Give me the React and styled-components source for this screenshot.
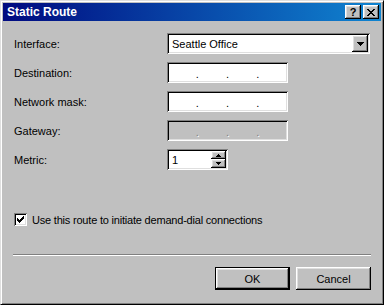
import React from 'react';
import styled, { createGlobalStyle } from 'styled-components';

const GlobalStyle = createGlobalStyle`
    body {
        margin: 0;
        background: #c0c0c0;
        font-family: "Liberation Sans", Arial, sans-serif;
        font-size: 11px;
        color: #000;
    }
`;

const raised = `
    background: #c0c0c0;
    box-shadow: inset -1px -1px #000, inset 1px 1px #fff, inset -2px -2px #808080, inset 2px 2px #dfdfdf;
`;

const sunken = `
    box-shadow: inset 1px 1px #808080, inset -1px -1px #fff, inset 2px 2px #000, inset -2px -2px #dfdfdf;
`;

const Window = styled.div`
    width: 384px;
    height: 305px;
    box-sizing: border-box;
    border: 1px solid;
    border-color: #dfdfdf #000 #000 #dfdfdf;
    box-shadow: inset 1px 1px #fff, inset -1px -1px #808080;
    padding: 2px;
    display: flex;
    flex-direction: column;
    background: #c0c0c0;
`;

const TitleBar = styled.div`
    height: 18px;
    display: flex;
    align-items: center;
    padding: 0 2px 0 4px;
    background: linear-gradient(to right, #000a80, #1084d0);
    color: #fff;
    font-weight: bold;
    font-size: 12px;
`;

const CaptionButtons = styled.div`
    margin-left: auto;
    display: flex;
    gap: 2px;
`;

const CaptionButton = styled.div`
    ${raised}
    width: 16px;
    height: 14px;
    display: flex;
    align-items: center;
    justify-content: center;
    color: #000;
    font-size: 11px;
    font-weight: bold;
    line-height: 1;
`;

const Body = styled.div`
    flex: 1;
    padding: 0 10px;
    display: flex;
    flex-direction: column;
`;

const Form = styled.div`
    margin-top: 12px;
    display: grid;
    grid-template-columns: 154px auto;
    row-gap: 8px;
    align-items: center;
`;

const Label = styled.div`
    padding-left: 1px;
`;

const Field = styled.div`
    ${sunken}
    box-sizing: border-box;
    height: 21px;
    width: ${p => p.$width}px;
    background: ${p => (p.$disabled ? '#c0c0c0' : '#fff')};
    display: flex;
    align-items: center;
`;

const FieldText = styled.span`
    padding-left: 5px;
    flex: 1;
`;

const DropButton = styled.div`
    ${raised}
    width: 16px;
    height: 17px;
    margin-right: 2px;
    display: flex;
    align-items: center;
    justify-content: center;
`;

const Dots = styled.div`
    flex: 1;
    display: flex;
    justify-content: space-evenly;
    padding-top: 3px;
    color: ${p => (p.$disabled ? '#808080' : '#000')};
    text-shadow: ${p => (p.$disabled ? '1px 1px #fff' : 'none')};
`;

const Dot = styled.span`
    width: 0;
    display: flex;
    justify-content: center;
`;

const SpinButtons = styled.div`
    display: flex;
    flex-direction: column;
    margin-right: 2px;
`;

const SpinButton = styled.div`
    ${raised}
    width: 15px;
    height: ${p => p.$h}px;
    display: flex;
    align-items: center;
    justify-content: center;
`;

const CheckRow = styled.label`
    margin-top: 43px;
    display: flex;
    align-items: center;
    gap: 5px;
    height: 13px;
    padding-left: 1px;
    letter-spacing: -0.2px;
`;

const CheckBox = styled.div`
    ${sunken}
    width: 13px;
    height: 13px;
    box-sizing: border-box;
    background: #fff;
    display: flex;
    align-items: center;
    justify-content: center;
`;

const Separator = styled.div`
    margin-top: 28px;
    border-top: 1px solid #808080;
    border-bottom: 1px solid #fff;
`;

const ButtonRow = styled.div`
    margin-top: 11px;
    display: flex;
    justify-content: flex-end;
    gap: 6px;
`;

const Button = styled.div`
    ${raised}
    width: 75px;
    height: 23px;
    box-sizing: border-box;
    display: flex;
    align-items: center;
    justify-content: center;
    ${p => p.$default && `
        border: 1px solid #000;
    `}
`;

const Pixels = ({ rows, color = '#000' }) => (
    <svg width={rows[0].length} height={rows.length} shapeRendering="crispEdges">
        {rows.map((r, y) =>
            r.split('').map((c, x) =>
                c === 'X' ? <rect key={x + '-' + y} x={x} y={y} width="1" height="1" fill={color} /> : null
            )
        )}
    </svg>
);

const closeGlyph = ['XX....XX', '.XX..XX.', '..XXXX..', '...XX...', '..XXXX..', '.XX..XX.', 'XX....XX'];
const checkGlyph = ['......X', '.....XX', 'X...XXX', 'XX.XXX.', 'XXXXX..', '.XXX...', '..X....'];
const downArrow = ['XXXXXXX', '.XXXXX.', '..XXX..', '...X...'];
const spinUp = ['..X..', '.XXX.', 'XXXXX'];
const spinDown = ['XXXXX', '.XXX.', '..X..'];

const IpField = ({ disabled }) => (
    <Field $width={121} $disabled={disabled}>
        <Dots $disabled={disabled}>
            <Dot>.</Dot>
            <Dot>.</Dot>
            <Dot>.</Dot>
        </Dots>
    </Field>
);

export default function App() {
    return (
        <>
            <GlobalStyle />
            <Window>
                <TitleBar>
                    Static Route
                    <CaptionButtons>
                        <CaptionButton>?</CaptionButton>
                        <CaptionButton><Pixels rows={closeGlyph} /></CaptionButton>
                    </CaptionButtons>
                </TitleBar>
                <Body>
                    <Form>
                        <Label>Interface:</Label>
                        <Field $width={203}>
                            <FieldText>Seattle Office</FieldText>
                            <DropButton><Pixels rows={downArrow} /></DropButton>
                        </Field>
                        <Label>Destination:</Label>
                        <IpField />
                        <Label>Network mask:</Label>
                        <IpField />
                        <Label>Gateway:</Label>
                        <IpField disabled />
                        <Label>Metric:</Label>
                        <Field $width={61}>
                            <FieldText>1</FieldText>
                            <SpinButtons>
                                <SpinButton $h={8}><Pixels rows={spinUp} /></SpinButton>
                                <SpinButton $h={9}><Pixels rows={spinDown} /></SpinButton>
                            </SpinButtons>
                        </Field>
                    </Form>
                    <CheckRow>
                        <CheckBox><Pixels rows={checkGlyph} /></CheckBox>
                        Use this route to initiate demand-dial connections
                    </CheckRow>
                    <Separator />
                    <ButtonRow>
                        <Button $default>OK</Button>
                        <Button>Cancel</Button>
                    </ButtonRow>
                </Body>
            </Window>
        </>
    );
}
